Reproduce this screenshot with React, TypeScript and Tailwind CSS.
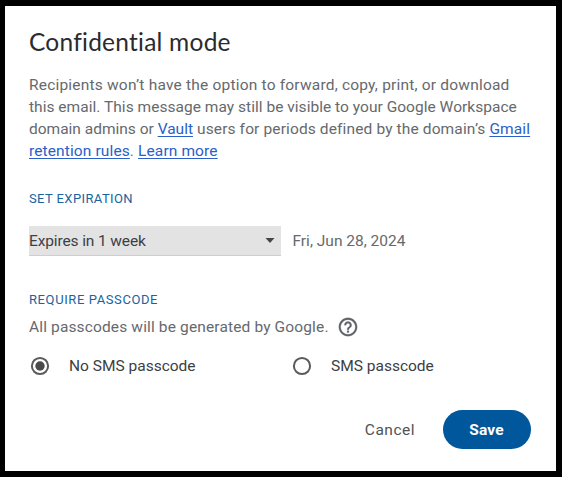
import { useState } from 'react'

const passcodeOptions = [
  { id: 'none', label: 'No SMS passcode', width: 'w-[262px]' },
  { id: 'sms', label: 'SMS passcode', width: 'w-[200px]' },
]

function HelpIcon() {
  return (
    <svg viewBox="0 0 24 24" className="h-[22px] w-[22px] fill-[#5f6368] stroke-[#5f6368] stroke-[0.3]">
      <path d="M11 18h2v-2h-2v2zm1-16C6.48 2 2 6.48 2 12s4.48 10 10 10 10-4.48 10-10S17.52 2 12 2zm0 18c-4.41 0-8-3.59-8-8s3.59-8 8-8 8 3.59 8 8-3.59 8-8 8zm0-14c-2.21 0-4 1.79-4 4h2c0-1.1.9-2 2-2s2 .9 2 2c0 2-3 1.75-3 5h2c0-2.25 3-2.5 3-5 0-2.21-1.79-4-4-4z" />
    </svg>
  )
}

function Radio({ checked }: { checked: boolean }) {
  return (
    <svg viewBox="0 0 20 20" className="h-5 w-5">
      <circle cx="10" cy="10" r="8.1" fill="none" stroke="#5a5a5a" strokeWidth="2" />
      {checked && <circle cx="10" cy="10" r="4.7" fill="#4a4a4a" />}
    </svg>
  )
}

function Link({ children }: { children: string }) {
  return (
    <a href="#" className="text-[#2a60c8] underline decoration-1 underline-offset-2">
      {children}
    </a>
  )
}

export default function App() {
  const [passcode, setPasscode] = useState('none')

  return (
    <div className="h-[477px] w-[562px] overflow-hidden border-x-[5px] border-y-[6px] border-r-[6px] border-black bg-white pl-6 font-[Roboto,sans-serif] text-[15.5px] text-[#66696d]">
      <h1 className="mt-[20px] h-8 whitespace-nowrap font-[Lato,sans-serif] text-[24.5px] leading-8 tracking-[0.24px] text-[#2a2b2e]">
        Confidential mode
      </h1>

      {/* Description */}
      <div className="mt-[16px] whitespace-nowrap leading-[22px]">
        <p className="tracking-[0.2px]">Recipients won’t have the option to forward, copy, print, or download</p>
        <p className="tracking-[0.03px]">this email. This message may still be visible to your Google Workspace</p>
        <p>
          domain admins or <Link>Vault</Link>
          <span className="tracking-[0.13px]"> users for periods defined by the domain’s <Link>Gmail</Link></span>
        </p>
        <p className="tracking-[0.12px]">
          <Link>retention rules</Link>. <Link>Learn more</Link>
        </p>
      </div>

      {/* Expiration */}
      <h2 className="mt-[27px] text-[13px] leading-5 tracking-[0.4px] text-[#1a639f]">SET EXPIRATION</h2>
      <div className="mt-[17px] flex items-center">
        <button className="flex h-[30px] w-[252px] items-center justify-between border-b border-[#cfcfcf] bg-[#e3e3e3] pr-[6px] text-[#3c4043]">
          <span className="pt-0.5 tracking-[-0.12px]">Expires in 1 week</span>
          <svg viewBox="0 0 10 5" className="h-[5px] w-[10px] fill-[#444746]">
            <path d="M0.5 0h9L5 5z" />
          </svg>
        </button>
        <span className="ml-[11.5px] pt-0.5">Fri, Jun 28, 2024</span>
      </div>

      {/* Passcode */}
      <h2 className="mt-[34px] text-[13px] leading-5 tracking-[0.6px] text-[#1a639f]">REQUIRE PASSCODE</h2>
      <div className="mt-[6px] flex h-[22px] items-center gap-2">
        <span className="pt-0.5 tracking-[0.14px]">All passcodes will be generated by Google.</span>
        <HelpIcon />
      </div>
      <div className="mt-[18px] flex h-5 pl-px">
        {passcodeOptions.map((option) => (
          <button
            key={option.id}
            onClick={() => setPasscode(option.id)}
            className={`flex items-center gap-[19px] text-[#3c4043] ${option.width}`}
          >
            <Radio checked={passcode === option.id} />
            <span className="pt-0.5">{option.label}</span>
          </button>
        ))}
      </div>

      {/* Actions */}
      <div className="mt-[34px] flex items-center justify-end pr-[25px]">
        <button className="mr-[28px] pt-0.5 tracking-[0.5px] text-[#505356]">Cancel</button>
        <button className="h-[39px] w-[88px] rounded-full bg-[#01579b] pt-0.5 pr-px font-bold tracking-[0.2px] text-white">
          Save
        </button>
      </div>
    </div>
  )
}
